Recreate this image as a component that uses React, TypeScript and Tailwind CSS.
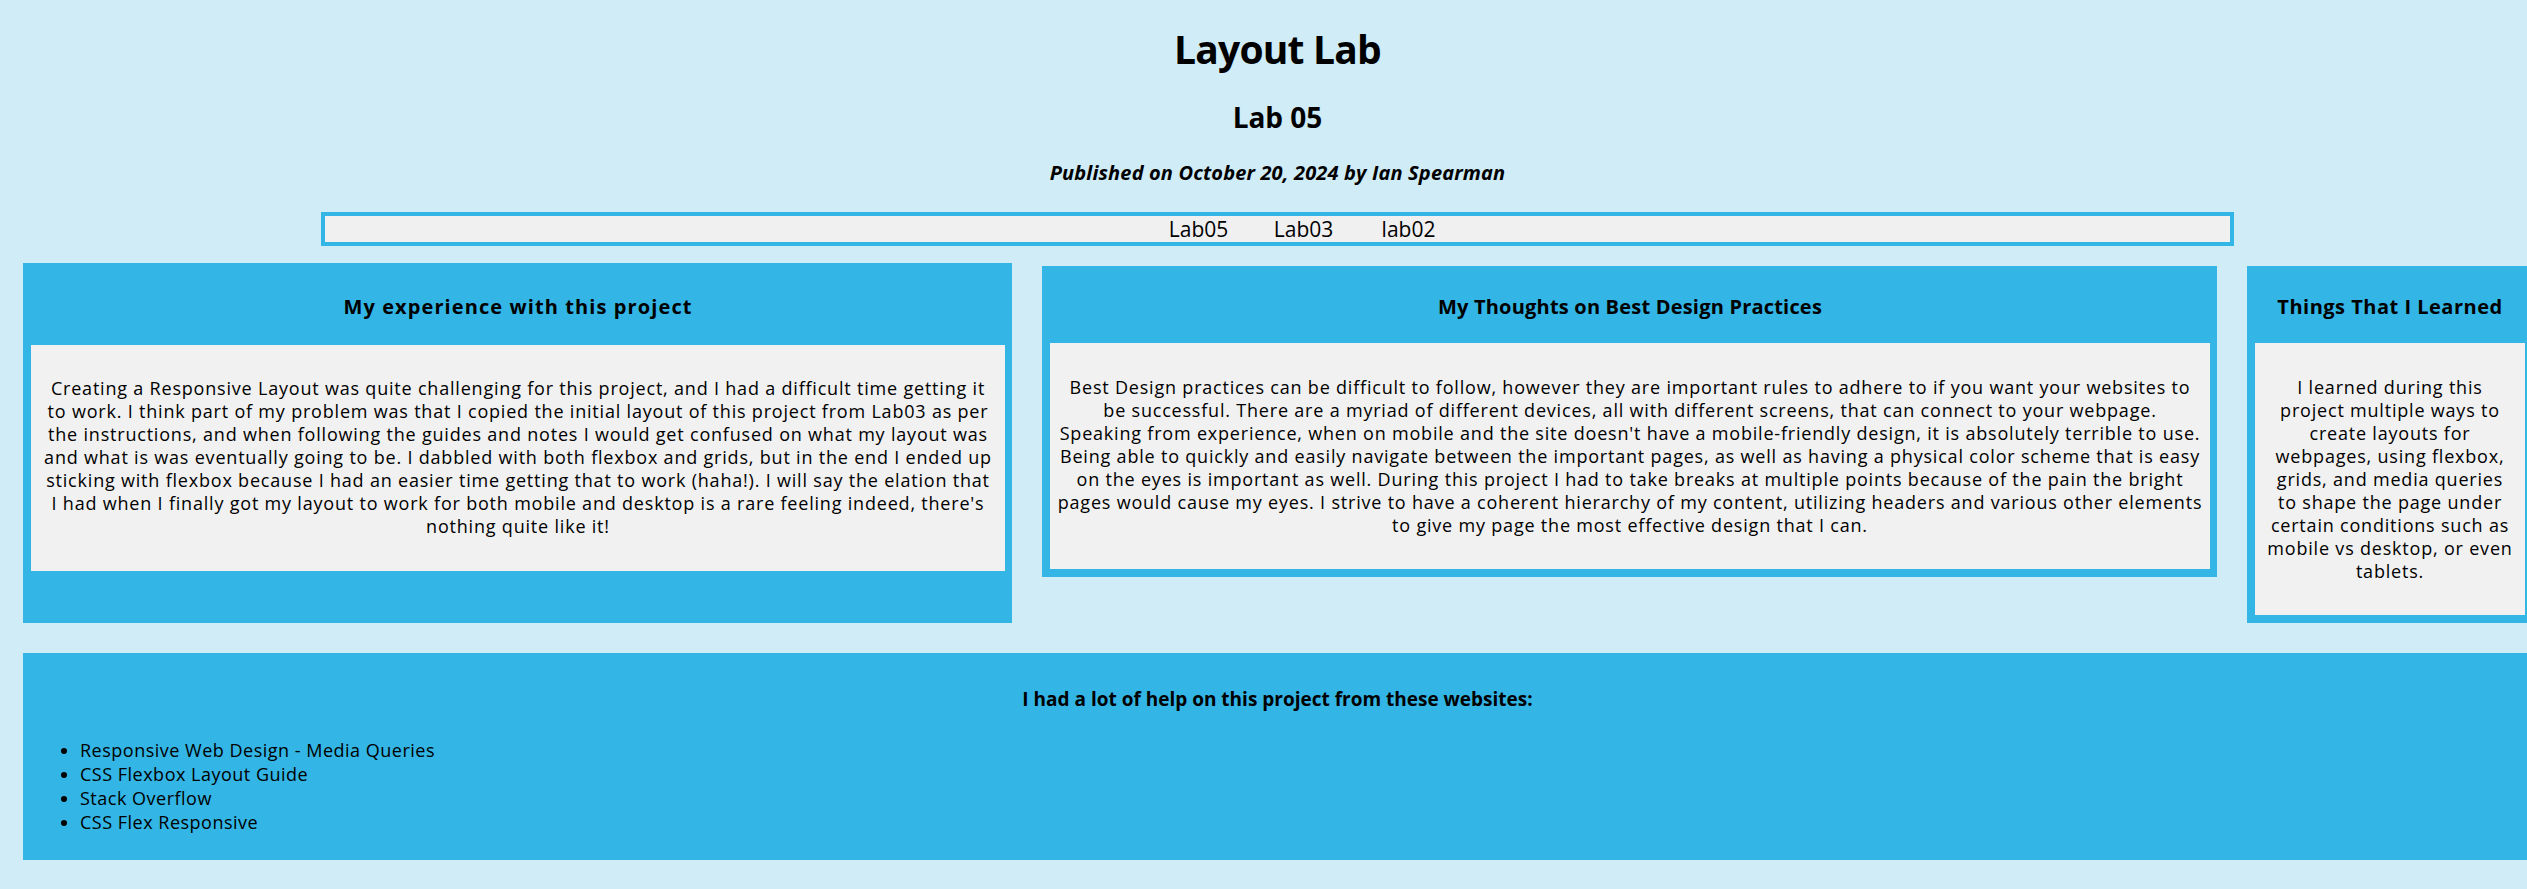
import React from "react";

const card1 = [
  "Creating a Responsive Layout was quite challenging for this project, and I had a difficult time getting it",
  "to work. I think part of my problem was that I copied the initial layout of this project from Lab03 as per",
  "the instructions, and when following the guides and notes I would get confused on what my layout was",
  "and what is was eventually going to be. I dabbled with both flexbox and grids, but in the end I ended up",
  "sticking with flexbox because I had an easier time getting that to work (haha!). I will say the elation that",
  "I had when I finally got my layout to work for both mobile and desktop is a rare feeling indeed, there's",
  "nothing quite like it!",
];

const card2 = [
  "Best Design practices can be difficult to follow, however they are important rules to adhere to if you want your websites to",
  "be successful. There are a myriad of different devices, all with different screens, that can connect to your webpage.",
  "Speaking from experience, when on mobile and the site doesn't have a mobile-friendly design, it is absolutely terrible to use.",
  "Being able to quickly and easily navigate between the important pages, as well as having a physical color scheme that is easy",
  "on the eyes is important as well. During this project I had to take breaks at multiple points because of the pain the bright",
  "pages would cause my eyes. I strive to have a coherent hierarchy of my content, utilizing headers and various other elements",
  "to give my page the most effective design that I can.",
];

const card3 = [
  "I learned during this",
  "project multiple ways to",
  "create layouts for",
  "webpages, using flexbox,",
  "grids, and media queries",
  "to shape the page under",
  "certain conditions such as",
  "mobile vs desktop, or even",
  "tablets.",
];

const links = [
  "Responsive Web Design - Media Queries",
  "CSS Flexbox Layout Guide",
  "Stack Overflow",
  "CSS Flex Responsive",
];

function Lines({ lines }: { lines: string[] }) {
  return (
    <p className="text-center text-[18px] leading-[23px] tracking-[0.8px]">
      {lines.map((l, i) => (
        <span key={i} className="block whitespace-nowrap">
          {l}
        </span>
      ))}
    </p>
  );
}

export default function App() {
  return (
    <div className="min-h-[889px] w-full overflow-hidden bg-[#cfecf7] font-['Open_Sans','Noto_Sans',sans-serif] text-black">
      <div className="ml-[23px] w-[2509px] pt-[25px]">
        <header className="text-center">
          <h1 className="text-[39px] font-bold leading-[48px] tracking-[-0.8px]">Layout Lab</h1>
          <h2 className="mt-[28px] text-[28px] font-bold leading-[32px]">Lab 05</h2>
          <p className="mt-[28px] text-[20px] font-bold italic leading-[24px] tracking-[0.15px]">
            Published on October 20, 2024 by Ian Spearman
          </p>
        </header>

        <nav className="mx-auto mt-[27px] h-[34px] w-[1913px] border-[4px] border-[#33b5e5] bg-[#f0f0f0]">
          <ul className="flex h-full items-center justify-center pl-[52px] text-[21px] leading-[26px]">
            <li className="w-[105px] text-center">Lab05</li>
            <li className="w-[105px] text-center">Lab03</li>
            <li className="w-[105px] text-center">lab02</li>
          </ul>
        </nav>

        <main className="mt-[17px] flex items-start gap-[30px]">
          <section className="flex h-[360px] w-[989px] shrink-0 flex-col bg-[#33b5e5] pl-[8px] pr-[7px]">
            <h3 className="pt-[32px] pb-[26px] text-center text-[20px] font-bold leading-[24px] tracking-[1.1px]">
              My experience with this project
            </h3>
            <div className="h-[226px] bg-[#f1f1f1] pt-[32px]">
              <Lines lines={card1} />
            </div>
          </section>

          <section className="mt-[3px] flex h-[311px] w-[1175px] shrink-0 flex-col bg-[#33b5e5] pl-[8px] pr-[7px]">
            <h3 className="pt-[29px] pb-[24px] text-center text-[20px] font-bold leading-[24px] tracking-[0.2px]">
              My Thoughts on Best Design Practices
            </h3>
            <div className="h-[226px] bg-[#f1f1f1] pt-[33px]">
              <Lines lines={card2} />
            </div>
          </section>

          <section className="mt-[3px] flex h-[357px] w-[285px] shrink-0 flex-col bg-[#33b5e5] pl-[8px] pr-[7px]">
            <h3 className="pt-[29px] pb-[24px] text-center text-[20px] font-bold leading-[24px] tracking-[0.5px]">
              Things That I Learned
            </h3>
            <div className="h-[272px] bg-[#f1f1f1] pt-[33px]">
              <Lines lines={card3} />
            </div>
          </section>
        </main>

        <footer className="mt-[30px] h-[207px] bg-[#33b5e5] pt-[36px]">
          <h4 className="text-center text-[19px] font-bold leading-[20px]">
            I had a lot of help on this project from these websites:
          </h4>
          <ul className="mt-[29px] list-disc pl-[57px] text-[18px] leading-[24px] tracking-[0.5px]">
            {links.map((l) => (
              <li key={l}>{l}</li>
            ))}
          </ul>
        </footer>
      </div>
    </div>
  );
}
